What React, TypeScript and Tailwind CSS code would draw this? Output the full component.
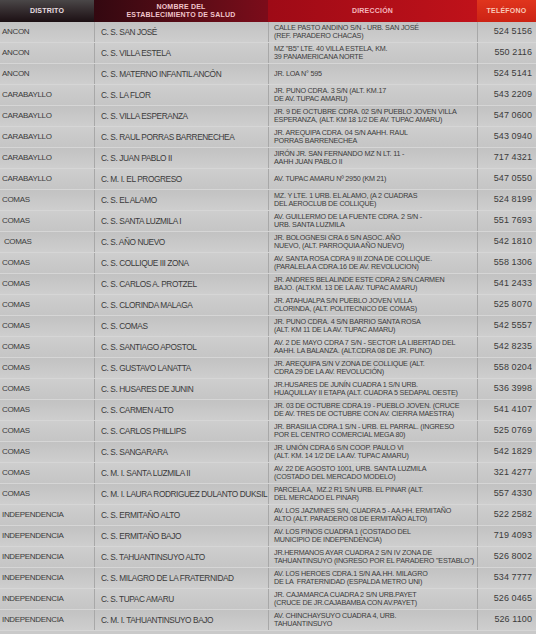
const rows: [string, string, string, string][] = [
  ['ANCON', 'C. S. SAN JOSÉ', 'CALLE PASTO ANDINO S/N - URB. SAN JOSÉ\n(REF. PARADERO CHACAS)', '524 5156'],
  ['ANCON', 'C. S. VILLA ESTELA', 'MZ "B5" LTE. 40 VILLA ESTELA, KM.\n39 PANAMERICANA NORTE', '550 2116'],
  ['ANCON', 'C. S. MATERNO INFANTIL ANCÓN', 'JR. LOA N° 595', '524 5141'],
  ['CARABAYLLO', 'C. S. LA FLOR', 'JR. PUNO CDRA. 3 S/N (ALT. KM.17\nDE AV. TUPAC AMARU)', '543 2209'],
  ['CARABAYLLO', 'C. S. VILLA ESPERANZA', 'JR. 9 DE OCTUBRE CDRA. 02 S/N PUEBLO JOVEN VILLA\nESPERANZA, (ALT. KM 18 1/2 DE AV. TUPAC AMARU)', '547 0600'],
  ['CARABAYLLO', 'C. S. RAUL PORRAS BARRENECHEA', 'JR. AREQUIPA CDRA. 04 S/N AAHH. RAUL\nPORRAS BARRENECHEA', '543 0940'],
  ['CARABAYLLO', 'C. S. JUAN PABLO II', 'JIRÓN JR. SAN FERNANDO MZ N LT. 11 -\nAAHH JUAN PABLO II', '717 4321'],
  ['CARABAYLLO', 'C. M. I. EL PROGRESO', 'AV. TUPAC AMARU Nº 2950 (KM 21)', '547 0550'],
  ['COMAS', 'C. S. EL ALAMO', 'MZ. Y LTE. 1 URB. EL ALAMO, (A 2 CUADRAS\nDEL AEROCLUB DE COLLIQUE)', '524 8199'],
  ['COMAS', 'C. S. SANTA LUZMILA I', 'AV. GUILLERMO DE LA FUENTE CDRA. 2 S/N -\nURB. SANTA LUZMILA', '551 7693'],
  [' COMAS', 'C. S. AÑO NUEVO', 'JR. BOLOGNESI CRA.6 S/N ASOC. AÑO\nNUEVO, (ALT. PARROQUIA AÑO NUEVO)', '542 1810'],
  ['COMAS', 'C. S. COLLIQUE III ZONA', 'AV. SANTA ROSA CDRA 9 III ZONA DE COLLIQUE.\n(PARALELA A CDRA.16 DE AV. REVOLUCION)', '558 1306'],
  ['COMAS', 'C. S. CARLOS A. PROTZEL', 'JR. ANDRES BELALINDE ESTE CDRA 2 S/N.CARMEN\nBAJO. (ALT.KM. 13 DE LA AV. TUPAC AMARU)', '541 2433'],
  ['COMAS', 'C. S. CLORINDA MALAGA', 'JR. ATAHUALPA S/N PUEBLO JOVEN VILLA\nCLORINDA, (ALT. POLITECNICO DE COMAS)', '525 8070'],
  ['COMAS', 'C. S. COMAS', 'JR. PUNO CDRA. 4 S/N BARRIO SANTA ROSA\n(ALT. KM 11 DE LA AV. TUPAC AMARU)', '542 5557'],
  ['COMAS', 'C. S. SANTIAGO APOSTOL', 'AV. 2 DE MAYO CDRA 7 S/N - SECTOR LA LIBERTAD DEL\nAAHH. LA BALANZA. (ALT.CDRA 08 DE JR. PUNO)', '542 8235'],
  ['COMAS', 'C. S. GUSTAVO LANATTA', 'JR. AREQUIPA S/N V ZONA DE COLLIQUE (ALT.\nCDRA 29 DE LA AV. REVOLUCIÓN)', '558 0204'],
  ['COMAS', 'C. S. HUSARES DE JUNIN', 'JR.HUSARES DE JUNÍN CUADRA 1 S/N URB.\nHUAQUILLAY II ETAPA (ALT. CUADRA 5 SEDAPAL OESTE)', '536 3998'],
  ['COMAS', 'C. S. CARMEN ALTO', 'JR. 03 DE OCTUBRE CDRA.19 - PUEBLO JOVEN. (CRUCE\nDE AV. TRES DE OCTUBRE CON AV. CIERRA MAESTRA)', '541 4107'],
  ['COMAS', 'C. S. CARLOS PHILLIPS', 'JR. BRASILIA CDRA.1 S/N - URB. EL PARRAL. (INGRESO\nPOR EL CENTRO COMERCIAL MEGA 80)', '525 0769'],
  ['COMAS', 'C. S. SANGARARA', 'JR. UNIÓN CDRA.6 S/N COOP. PAULO VI\n(ALT. KM. 14 1/2 DE LA AV. TUPAC AMARU)', '542 1829'],
  ['COMAS', 'C. M. I. SANTA LUZMILA II', 'AV. 22 DE AGOSTO 1001, URB. SANTA LUZMILA\n(COSTADO DEL MERCADO MODELO)', '321 4277'],
  ['COMAS', 'C. M. I. LAURA RODRIGUEZ DULANTO DUKSIL', 'PARCELA A,  MZ.2 R1 S/N URB. EL PINAR (ALT.\nDEL MERCADO EL PINAR)', '557 4330'],
  ['INDEPENDENCIA', 'C. S. ERMITAÑO ALTO', 'AV. LOS JAZMINES S/N, CUADRA 5 - AA.HH. ERMITAÑO\nALTO (ALT. PARADERO 08 DE ERMITAÑO ALTO)', '522 2582'],
  ['INDEPENDENCIA', 'C. S. ERMITAÑO BAJO', 'AV. LOS PINOS CUADRA 1 (COSTADO DEL\nMUNICIPIO DE INDEPENDENCIA)', '719 4093'],
  ['INDEPENDENCIA', 'C. S. TAHUANTINSUYO ALTO', 'JR.HERMANOS AYAR CUADRA 2 S/N IV ZONA DE\nTAHUANTINSUYO (INGRESO POR EL PARADERO "ESTABLO")', '526 8002'],
  ['INDEPENDENCIA', 'C. S. MILAGRO DE LA FRATERNIDAD', 'AV. LOS HEROES CDRA.1 S/N AA.HH. MILAGRO\nDE LA  FRATERNIDAD (ESPALDA METRO UNI)', '534 7777'],
  ['INDEPENDENCIA', 'C. S. TUPAC AMARU', 'JR. CAJAMARCA CUADRA 2 S/N URB.PAYET\n(CRUCE DE JR.CAJABAMBA CON AV.PAYET)', '526 0465'],
  ['INDEPENDENCIA', 'C. M. I. TAHUANTINSUYO BAJO', 'AV. CHINCHAYSUYO CUADRA 4, URB.\nTAHUANTINSUYO', '526 1100'],
];

const cols = 'grid grid-cols-[94px_174px_209px_59px]';

export default function App() {
  return (
    <div className="h-[634px] w-[536px] overflow-hidden bg-[#c9c9c9] font-['Liberation_Sans',Arial,sans-serif] text-[#3b3b3b]">
      <div className={`${cols} h-[22px] text-[7px] font-bold uppercase leading-[8px] tracking-[0.03em]`}>
        <div className="flex items-center justify-center bg-gradient-to-b from-[#4a4748] to-[#1c1014] text-[#e9dfe1]">
          Distrito
        </div>
        <div className="flex flex-col items-center justify-center bg-gradient-to-r from-[#330810] to-[#7c0c1a] text-center text-[#f1c4ca]">
          <span>Nombre del</span>
          <span>Establecimiento de Salud</span>
        </div>
        <div className="flex items-center justify-center bg-gradient-to-r from-[#9e0a16] to-[#c0121a] text-[#f4b6bd]">
          Dirección
        </div>
        <div className="flex items-center justify-center bg-gradient-to-b from-[#e0351d] to-[#cc2214] text-[#f8c8b8]">
          Teléfono
        </div>
      </div>
      {rows.map(([distrito, nombre, direccion, telefono], i) => (
        <div
          key={i}
          className={`${cols} h-[21px] border-b border-[#d6d6d6] ${
            i % 2 === 0
              ? 'bg-gradient-to-b from-[#c2c2c2] to-[#cecece]'
              : 'bg-gradient-to-b from-[#cecece] to-[#c5c5c5]'
          }`}
        >
          <div className="flex items-center whitespace-pre pl-[2px] text-[8px] tracking-[-0.04em]">{distrito}</div>
          <div className="flex items-center overflow-hidden whitespace-nowrap border-l border-[#a8a8a8] pl-[6px] text-[8.3px] tracking-[-0.05em]">
            {nombre}
          </div>
          <div className="flex items-center whitespace-pre border-l border-[#a8a8a8] pl-[5px] text-[7.2px] leading-[8.5px] tracking-[-0.03em]">
            {direccion}
          </div>
          <div className="flex items-center justify-end border-l border-[#a8a8a8] pr-[4px] text-[9px] tracking-[0.01em]">
            {telefono}
          </div>
        </div>
      ))}
    </div>
  );
}
